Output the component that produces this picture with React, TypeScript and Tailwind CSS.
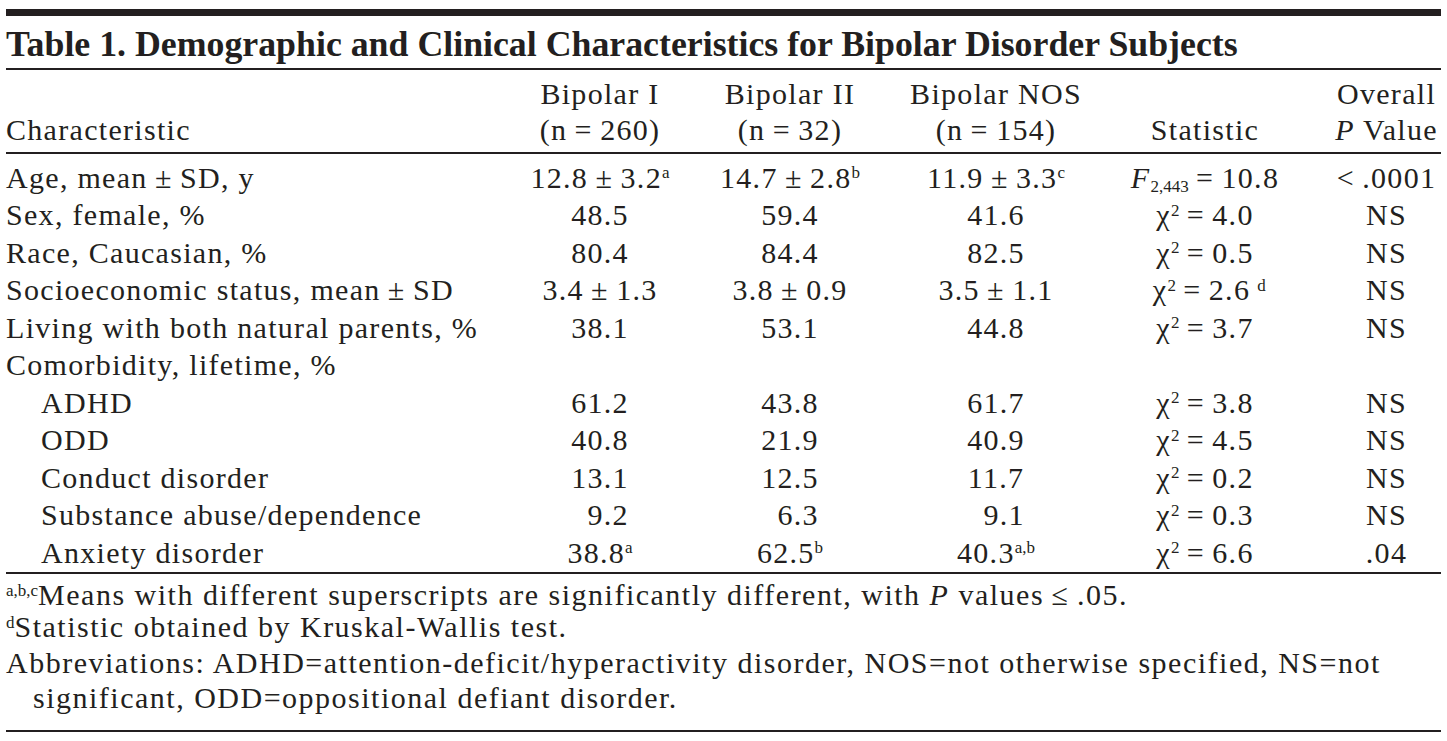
import React from "react";

type Row = {
  label: string;
  indent?: boolean;
  cells?: React.ReactNode[];
  stat?: React.ReactNode;
  p?: string;
};

const T = "\u2009";

function Sup({ children }: { children: React.ReactNode }) {
  return <sup className="top-[-0.55em] text-[17px] tracking-normal">{children}</sup>;
}

function Pad({ children }: { children: React.ReactNode }) {
  // keeps one-digit values aligned with two-digit ones
  return (
    <>
      <span className="invisible">0</span>
      {children}
    </>
  );
}

function Chi({ v, note }: { v: string; note?: string }) {
  return (
    <span>
      χ<Sup>2</Sup>
      {T}={T}
      {v}
      {note && (
        // hangs past the centred value, like the printed table
        <span className="inline-block w-0 whitespace-nowrap pl-[7px]">
          <Sup>{note}</Sup>
        </span>
      )}
    </span>
  );
}

const rows: Row[] = [
  {
    label: `Age, mean${T}±${T}SD, y`,
    cells: [
      <>12.8{T}±{T}3.2<Sup>a</Sup></>,
      <>14.7{T}±{T}2.8<Sup>b</Sup></>,
      <>11.9{T}±{T}3.3<Sup>c</Sup></>,
    ],
    stat: (
      <>
        <i>F</i>
        <sub className="text-[17px] tracking-normal">2,443</sub>
        {T}={T}10.8
      </>
    ),
    p: `<${T}.0001`,
  },
  { label: "Sex, female, %", cells: ["48.5", "59.4", "41.6"], stat: <Chi v="4.0" />, p: "NS" },
  { label: "Race, Caucasian, %", cells: ["80.4", "84.4", "82.5"], stat: <Chi v="0.5" />, p: "NS" },
  {
    label: `Socioeconomic status, mean${T}±${T}SD`,
    cells: [`3.4${T}±${T}1.3`, `3.8${T}±${T}0.9`, `3.5${T}±${T}1.1`],
    stat: <Chi v="2.6" note="d" />,
    p: "NS",
  },
  { label: "Living with both natural parents, %", cells: ["38.1", "53.1", "44.8"], stat: <Chi v="3.7" />, p: "NS" },
  { label: "Comorbidity, lifetime, %" },
  { label: "ADHD", indent: true, cells: ["61.2", "43.8", "61.7"], stat: <Chi v="3.8" />, p: "NS" },
  { label: "ODD", indent: true, cells: ["40.8", "21.9", "40.9"], stat: <Chi v="4.5" />, p: "NS" },
  { label: "Conduct disorder", indent: true, cells: ["13.1", "12.5", "11.7"], stat: <Chi v="0.2" />, p: "NS" },
  {
    label: "Substance abuse/dependence",
    indent: true,
    cells: [<Pad>9.2</Pad>, <Pad>6.3</Pad>, <Pad>9.1</Pad>],
    stat: <Chi v="0.3" />,
    p: "NS",
  },
  {
    label: "Anxiety disorder",
    indent: true,
    cells: [
      <>38.8<Sup>a</Sup></>,
      <>62.5<Sup>b</Sup></>,
      <>40.3<Sup>a,b</Sup></>,
    ],
    stat: <Chi v="6.6" />,
    p: ".04",
  },
];

const grid = "grid grid-cols-[499px_190px_190px_222px_196px_1fr]";

export default function App() {
  return (
    <div className="w-[1447px] h-[741px] overflow-hidden bg-white px-[6px] pt-[9px] font-['Liberation_Serif',serif] text-[#231f20]">
      <div className="h-[7px] bg-[#231f20]" />

      <h1 className="pt-[4px] text-[35.8px] font-semibold leading-[48px] whitespace-nowrap">
        Table 1. Demographic and Clinical Characteristics for Bipolar Disorder Subjects
      </h1>
      <div className="h-[2px] bg-[#231f20]" />

      <div className="text-[30px] tracking-[1.3px]">
        {/* column heads */}
        <div className={`${grid} items-end pt-[6px] pb-[4px] leading-[36px]`}>
          <div>Characteristic</div>
          <div className="text-center">
            Bipolar I
            <br />(n{T}={T}260)
          </div>
          <div className="text-center">
            Bipolar II
            <br />(n{T}={T}32)
          </div>
          <div className="text-center">
            Bipolar NOS
            <br />(n{T}={T}154)
          </div>
          <div className="text-center">Statistic</div>
          <div className="pl-[29px] text-center">
            Overall
            <br />
            <i>P</i> Value
          </div>
        </div>
        <div className="h-[2px] bg-[#231f20]" />

        {/* body */}
        <div className="pt-[4.5px] pb-[1px] leading-[37.5px]">
          {rows.map((r) => (
            <div key={r.label} className={`${grid} whitespace-nowrap`}>
              <div className={r.indent ? "pl-[35px]" : ""}>{r.label}</div>
              {[0, 1, 2].map((i) => (
                <div key={i} className="text-center">
                  {r.cells ? r.cells[i] : null}
                </div>
              ))}
              <div className="text-center">{r.stat}</div>
              <div className="pl-[29px] text-center">{r.p}</div>
            </div>
          ))}
        </div>
        <div className="h-[2px] bg-[#231f20]" />

        {/* notes */}
        <div className="pt-[5px] pb-[15px] leading-[32px] tracking-[1.5px] whitespace-nowrap">
          <p>
            <Sup>a,b,c</Sup>Means with different superscripts are significantly different, with <i>P</i> values{T}≤{T}.05.
          </p>
          <p>
            <Sup>d</Sup>Statistic obtained by Kruskal-Wallis test.
          </p>
          <p className="mt-[2px] pl-[27px] -indent-[27px] leading-[35px]">
            Abbreviations: ADHD=attention-deficit/hyperactivity disorder, NOS=not otherwise specified, NS=not
            <br />
            significant, ODD=oppositional defiant disorder.
          </p>
        </div>
        <div className="h-[2px] bg-[#231f20]" />
      </div>
    </div>
  );
}
